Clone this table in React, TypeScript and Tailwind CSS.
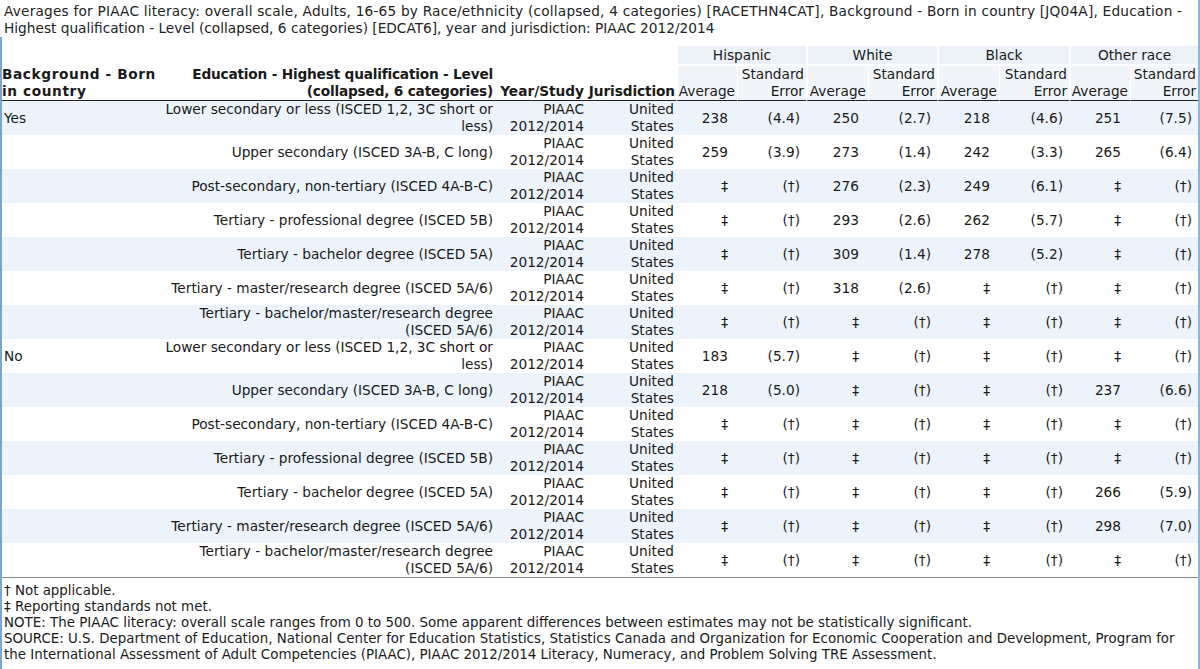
import React from "react";

type Row = { bg?: string; edu: string[]; vals: string[] };

const NA = ["‡", "(†)", "‡", "(†)", "‡", "(†)", "‡", "(†)"];
const LOWER = ["Lower secondary or less (ISCED 1,2, 3C short or", "less)"];
const UPPER = ["Upper secondary (ISCED 3A-B, C long)"];
const POST = ["Post-secondary, non-tertiary (ISCED 4A-B-C)"];
const PROF = ["Tertiary - professional degree (ISCED 5B)"];
const BACH = ["Tertiary - bachelor degree (ISCED 5A)"];
const MAST = ["Tertiary - master/research degree (ISCED 5A/6)"];
const BMR = ["Tertiary - bachelor/master/research degree", "(ISCED 5A/6)"];

const rows: Row[] = [
  { bg: "Yes", edu: LOWER, vals: ["238", "(4.4)", "250", "(2.7)", "218", "(4.6)", "251", "(7.5)"] },
  { edu: UPPER, vals: ["259", "(3.9)", "273", "(1.4)", "242", "(3.3)", "265", "(6.4)"] },
  { edu: POST, vals: ["‡", "(†)", "276", "(2.3)", "249", "(6.1)", "‡", "(†)"] },
  { edu: PROF, vals: ["‡", "(†)", "293", "(2.6)", "262", "(5.7)", "‡", "(†)"] },
  { edu: BACH, vals: ["‡", "(†)", "309", "(1.4)", "278", "(5.2)", "‡", "(†)"] },
  { edu: MAST, vals: ["‡", "(†)", "318", "(2.6)", "‡", "(†)", "‡", "(†)"] },
  { edu: BMR, vals: NA },
  { bg: "No", edu: LOWER, vals: ["183", "(5.7)", "‡", "(†)", "‡", "(†)", "‡", "(†)"] },
  { edu: UPPER, vals: ["218", "(5.0)", "‡", "(†)", "‡", "(†)", "237", "(6.6)"] },
  { edu: POST, vals: NA },
  { edu: PROF, vals: NA },
  { edu: BACH, vals: ["‡", "(†)", "‡", "(†)", "‡", "(†)", "266", "(5.9)"] },
  { edu: MAST, vals: ["‡", "(†)", "‡", "(†)", "‡", "(†)", "298", "(7.0)"] },
  { edu: BMR, vals: NA },
];

const groups = ["Hispanic", "White", "Black", "Other race"];

export default function App() {
  return (
    <div className="w-[1200px] h-[669px] overflow-hidden bg-white text-[#1a1a1a] font-['DejaVu_Sans',Verdana,sans-serif] text-[13.7px] leading-[17px] border-r-2 border-[#8db4dc] box-border">
      <div className="pl-[4px] pt-[3px] h-[37px] text-[#222] whitespace-nowrap">
        <div className="tracking-[0.2px]">
          Averages for PIAAC literacy: overall scale, Adults, 16-65 by Race/ethnicity (collapsed, 4 categories) [RACETHN4CAT], Background - Born in country [JQ04A], Education -
        </div>
        <div>Highest qualification - Level (collapsed, 6 categories) [EDCAT6], year and jurisdiction: PIAAC 2012/2014</div>
      </div>
      <div className="border-l-2 border-[#7aa6d4] h-[632px] pt-[9px]">
        <table className="table-fixed border-separate border-spacing-0 w-[1196px]">
          <colgroup>
            <col className="w-[158px]" />
            <col className="w-[336px]" />
            <col className="w-[90px]" />
            <col className="w-[90px]" />
            <col className="w-[61px]" />
            <col className="w-[69px]" />
            <col className="w-[62px]" />
            <col className="w-[69px]" />
            <col className="w-[62px]" />
            <col className="w-[70px]" />
            <col className="w-[61px]" />
            <col className="w-[68px]" />
          </colgroup>
          <thead>
            <tr className="h-[20px]">
              <th rowSpan={2} className="align-bottom text-left font-bold pl-[0px] border-b border-[#222] whitespace-nowrap tracking-[0.6px]">
                <div>Background - Born</div>
                <div>in country</div>
              </th>
              <th rowSpan={2} className="align-bottom text-right font-bold pr-[3px] border-b border-[#222] whitespace-nowrap tracking-[-0.2px]">
                <div>Education - Highest qualification - Level</div>
                <div>(collapsed, 6 categories)</div>
              </th>
              <th rowSpan={2} className="align-bottom text-right font-bold pr-[2px] border-b border-[#222] whitespace-nowrap">
                Year/Study
              </th>
              <th rowSpan={2} className="align-bottom text-right font-bold pr-[1px] border-b border-[#222] whitespace-nowrap tracking-[-0.1px]">
                Jurisdiction
              </th>
              {groups.map((g) => (
                <th
                  key={g}
                  colSpan={2}
                  className="font-normal text-center bg-[#ebf1f7] border-l-2 border-b-2 border-white h-[20px] leading-[18px] whitespace-nowrap"
                >
                  {g}
                </th>
              ))}
            </tr>
            <tr className="h-[34px]">
              {groups.map((g) => (
                <React.Fragment key={g}>
                  <th className="font-normal text-right align-bottom bg-[#f1f5f9] border-l-2 border-white border-b border-b-[#222] pr-[2px] whitespace-nowrap">
                    Average
                  </th>
                  <th className="font-normal text-right align-bottom bg-[#f1f5f9] border-l border-white border-b border-b-[#222] pr-[2px] whitespace-nowrap">
                    <div>Standard</div>
                    <div>Error</div>
                  </th>
                </React.Fragment>
              ))}
            </tr>
          </thead>
          <tbody>
            {rows.map((r, i) => {
              const last = i === rows.length - 1;
              return (
                <tr key={i} className={`h-[34px] ${i % 2 === 0 ? "bg-[#ecf3fa]" : "bg-white"}`}>
                  <td className={`align-middle text-left pl-[2px] ${last ? "border-b border-[#8a8a8a]" : ""}`}>{r.bg ?? ""}</td>
                  <td className={`align-middle text-right pr-[3px] whitespace-nowrap ${last ? "border-b border-[#8a8a8a]" : ""}`}>
                    {r.edu.map((l, k) => (
                      <div key={k}>{l}</div>
                    ))}
                  </td>
                  <td className={`align-middle text-right pr-[2px] whitespace-nowrap ${last ? "border-b border-[#8a8a8a]" : ""}`}>
                    <div>PIAAC</div>
                    <div>2012/2014</div>
                  </td>
                  <td className={`align-middle text-right pr-[2px] whitespace-nowrap ${last ? "border-b border-[#8a8a8a]" : ""}`}>
                    <div>United</div>
                    <div>States</div>
                  </td>
                  {r.vals.map((v, k) => (
                    <td
                      key={k}
                      className={`align-middle text-right whitespace-nowrap ${k % 2 === 0 ? "pr-[9px]" : "pr-[6px]"} ${last ? "border-b border-[#8a8a8a]" : ""}`}
                    >
                      {v}
                    </td>
                  ))}
                </tr>
              );
            })}
          </tbody>
        </table>
        <div className="pl-[2px] pt-[5px] text-[13.4px] leading-[16px] whitespace-nowrap text-[#1a1a1a]">
          <div>† Not applicable.</div>
          <div>‡ Reporting standards not met.</div>
          <div>NOTE: The PIAAC literacy: overall scale ranges from 0 to 500. Some apparent differences between estimates may not be statistically significant.</div>
          <div>
            SOURCE: U.S. Department of Education, National Center for Education Statistics, Statistics Canada and Organization for Economic Cooperation and Development, Program for
          </div>
          <div>the International Assessment of Adult Competencies (PIAAC), PIAAC 2012/2014 Literacy, Numeracy, and Problem Solving TRE Assessment.</div>
        </div>
      </div>
    </div>
  );
}
